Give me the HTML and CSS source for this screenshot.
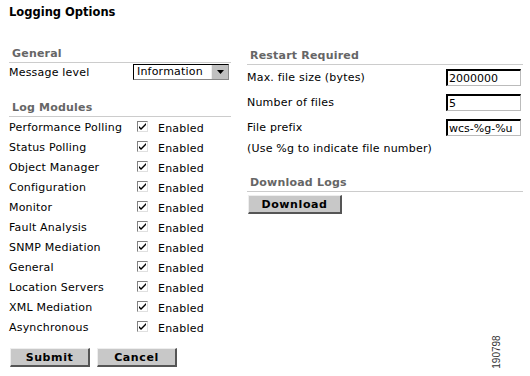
FILE: index.html
```html
<!DOCTYPE html>
<html lang="en">
<head>
    <meta charset="UTF-8">
    <title>Logging Options</title>
    <link rel="stylesheet" href="styles.css">
</head>
<body>
    <div class="page">
        <h1 class="title">Logging Options</h1>

        <div class="columns">
            <div class="col-left">
                <div class="section-head first">General</div>
                <div class="field-row">
                    <span class="label">Message level</span>
                    <span class="select">
                        <span class="select-text">Information</span>
                        <span class="select-btn">
                            <svg width="7" height="4" viewBox="0 0 7 4"><path d="M0 0h7L3.5 4z" fill="#000"/></svg>
                        </span>
                    </span>
                </div>

                <div class="section-head modules">Log Modules</div>
                <div class="module-row"><span class="label">Performance Polling</span><span class="check"><svg width="9" height="9" viewBox="0 0 9 9"><path d="M1 4l2 2 5-5v2l-5 5-2-2z" fill="#000"/></svg></span><span class="enabled">Enabled</span></div>
                <div class="module-row"><span class="label">Status Polling</span><span class="check"><svg width="9" height="9" viewBox="0 0 9 9"><path d="M1 4l2 2 5-5v2l-5 5-2-2z" fill="#000"/></svg></span><span class="enabled">Enabled</span></div>
                <div class="module-row"><span class="label">Object Manager</span><span class="check"><svg width="9" height="9" viewBox="0 0 9 9"><path d="M1 4l2 2 5-5v2l-5 5-2-2z" fill="#000"/></svg></span><span class="enabled">Enabled</span></div>
                <div class="module-row"><span class="label">Configuration</span><span class="check"><svg width="9" height="9" viewBox="0 0 9 9"><path d="M1 4l2 2 5-5v2l-5 5-2-2z" fill="#000"/></svg></span><span class="enabled">Enabled</span></div>
                <div class="module-row"><span class="label">Monitor</span><span class="check"><svg width="9" height="9" viewBox="0 0 9 9"><path d="M1 4l2 2 5-5v2l-5 5-2-2z" fill="#000"/></svg></span><span class="enabled">Enabled</span></div>
                <div class="module-row"><span class="label">Fault Analysis</span><span class="check"><svg width="9" height="9" viewBox="0 0 9 9"><path d="M1 4l2 2 5-5v2l-5 5-2-2z" fill="#000"/></svg></span><span class="enabled">Enabled</span></div>
                <div class="module-row"><span class="label">SNMP Mediation</span><span class="check"><svg width="9" height="9" viewBox="0 0 9 9"><path d="M1 4l2 2 5-5v2l-5 5-2-2z" fill="#000"/></svg></span><span class="enabled">Enabled</span></div>
                <div class="module-row"><span class="label">General</span><span class="check"><svg width="9" height="9" viewBox="0 0 9 9"><path d="M1 4l2 2 5-5v2l-5 5-2-2z" fill="#000"/></svg></span><span class="enabled">Enabled</span></div>
                <div class="module-row"><span class="label">Location Servers</span><span class="check"><svg width="9" height="9" viewBox="0 0 9 9"><path d="M1 4l2 2 5-5v2l-5 5-2-2z" fill="#000"/></svg></span><span class="enabled">Enabled</span></div>
                <div class="module-row"><span class="label">XML Mediation</span><span class="check"><svg width="9" height="9" viewBox="0 0 9 9"><path d="M1 4l2 2 5-5v2l-5 5-2-2z" fill="#000"/></svg></span><span class="enabled">Enabled</span></div>
                <div class="module-row"><span class="label">Asynchronous</span><span class="check"><svg width="9" height="9" viewBox="0 0 9 9"><path d="M1 4l2 2 5-5v2l-5 5-2-2z" fill="#000"/></svg></span><span class="enabled">Enabled</span></div>

                <div class="buttons">
                    <button class="btn submit-btn">Submit</button>
                    <button class="btn cancel-btn">Cancel</button>
                </div>
            </div>

            <div class="col-right">
                <div class="section-head restart">Restart Required</div>
                <div class="input-row">
                    <span class="label">Max. file size (bytes)</span>
                    <input class="text-input" type="text" value="2000000">
                </div>
                <div class="input-row">
                    <span class="label">Number of files</span>
                    <input class="text-input" type="text" value="5">
                </div>
                <div class="input-row">
                    <span class="label">File prefix</span>
                    <input class="text-input" type="text" value="wcs-%g-%u">
                </div>
                <div class="hint">(Use %g to indicate file number)</div>

                <div class="section-head download">Download Logs</div>
                <button class="btn download-btn">Download</button>
            </div>
        </div>
    </div>

    <div class="fig-number">190798</div>
</body>
</html>
```

FILE: styles.css
```css
* {
    box-sizing: border-box;
}

body {
    margin: 0;
    background: #ffffff;
    color: #000000;
    font-family: "DejaVu Sans", Verdana, sans-serif;
    font-size: 11px;
    letter-spacing: 0.2px;
    position: relative;
    width: 530px;
    height: 376px;
    overflow: hidden;
}

.page {
    padding: 4px 7px 0 9px;
}

.title {
    margin: 0;
    font-size: 11.5px;
    font-weight: bold;
    line-height: 16px;
    letter-spacing: 0;
}

.columns {
    display: flex;
    gap: 16px;
}

.col-left {
    width: 222px;
}

.col-right {
    width: 276px;
}

/* section headings with the grey rule */
.section-head {
    color: #666666;
    font-weight: bold;
    line-height: 14px;
    padding: 1px 0 1px 3px;
    border-bottom: 1px solid #cccccc;
}

.section-head.first {
    margin-top: 26px;
}

.section-head.modules {
    margin-top: 19px;
}

.section-head.restart {
    margin-top: 28px;
}

.section-head.download {
    margin-top: 17px;
}

.field-row {
    display: flex;
    align-items: center;
    height: 18px;
}

.field-row .label {
    width: 124px;
}

.select {
    display: flex;
    align-items: center;
    width: 96px;
    height: 16px;
    border: 1px solid #000;
    border-right-color: #888;
    border-bottom-color: #888;
    background: #fff;
}

.select-text {
    flex: 1;
    padding-left: 3px;
    line-height: 14px;
}

.select-btn {
    display: flex;
    align-items: center;
    justify-content: center;
    width: 17px;
    height: 14px;
    background: #c0c0c0;
    border-left: 1px solid #eeeeee;
}

.module-row {
    display: flex;
    align-items: center;
    height: 20px;
}

.module-row .label {
    width: 128px;
}

.check {
    display: flex;
    align-items: center;
    justify-content: center;
    width: 11px;
    height: 11px;
    margin-top: -1px;
    border-top: 1px solid #808080;
    border-left: 1px solid #808080;
    border-right: 1px solid #e0e0e0;
    border-bottom: 1px solid #e0e0e0;
    background: #fff;
}

.enabled {
    margin-left: 10px;
    padding-top: 3px;
}

.buttons {
    display: flex;
    gap: 7px;
    margin-top: 11px;
    padding-left: 1px;
}

.btn {
    height: 19px;
    padding: 0;
    font-family: "DejaVu Sans", Verdana, sans-serif;
    font-size: 11px;
    font-weight: bold;
    letter-spacing: 0.6px;
    color: #000;
    background: #c8c8c8;
    border: 1px solid;
    border-color: #eeeeee #555555 #555555 #eeeeee;
    border-width: 1px 2px 2px 1px;
}

.submit-btn,
.cancel-btn {
    width: 80px;
}

.download-btn {
    width: 94px;
    margin-top: 3px;
    margin-left: 1px;
}

.input-row {
    display: flex;
    align-items: center;
    justify-content: space-between;
    height: 25px;
}

.text-input {
    width: 75px;
    height: 17px;
    padding: 0 0 0 1px;
    margin-right: 2px;
    font-family: "DejaVu Sans", Verdana, sans-serif;
    font-size: 11px;
    color: #000;
    background: #fff;
    border: 1px solid;
    border-color: #000 #bbbbbb #bbbbbb #000;
    border-width: 2px 1px 1px 2px;
}

.hint {
    line-height: 18px;
}

.fig-number {
    position: absolute;
    left: 479px;
    top: 346px;
    width: 36px;
    line-height: 12px;
    text-align: center;
    transform: rotate(-90deg);
    font-family: "Liberation Sans", Arial, sans-serif;
    font-size: 10px;
    letter-spacing: 0;
    color: #333;
}
```
